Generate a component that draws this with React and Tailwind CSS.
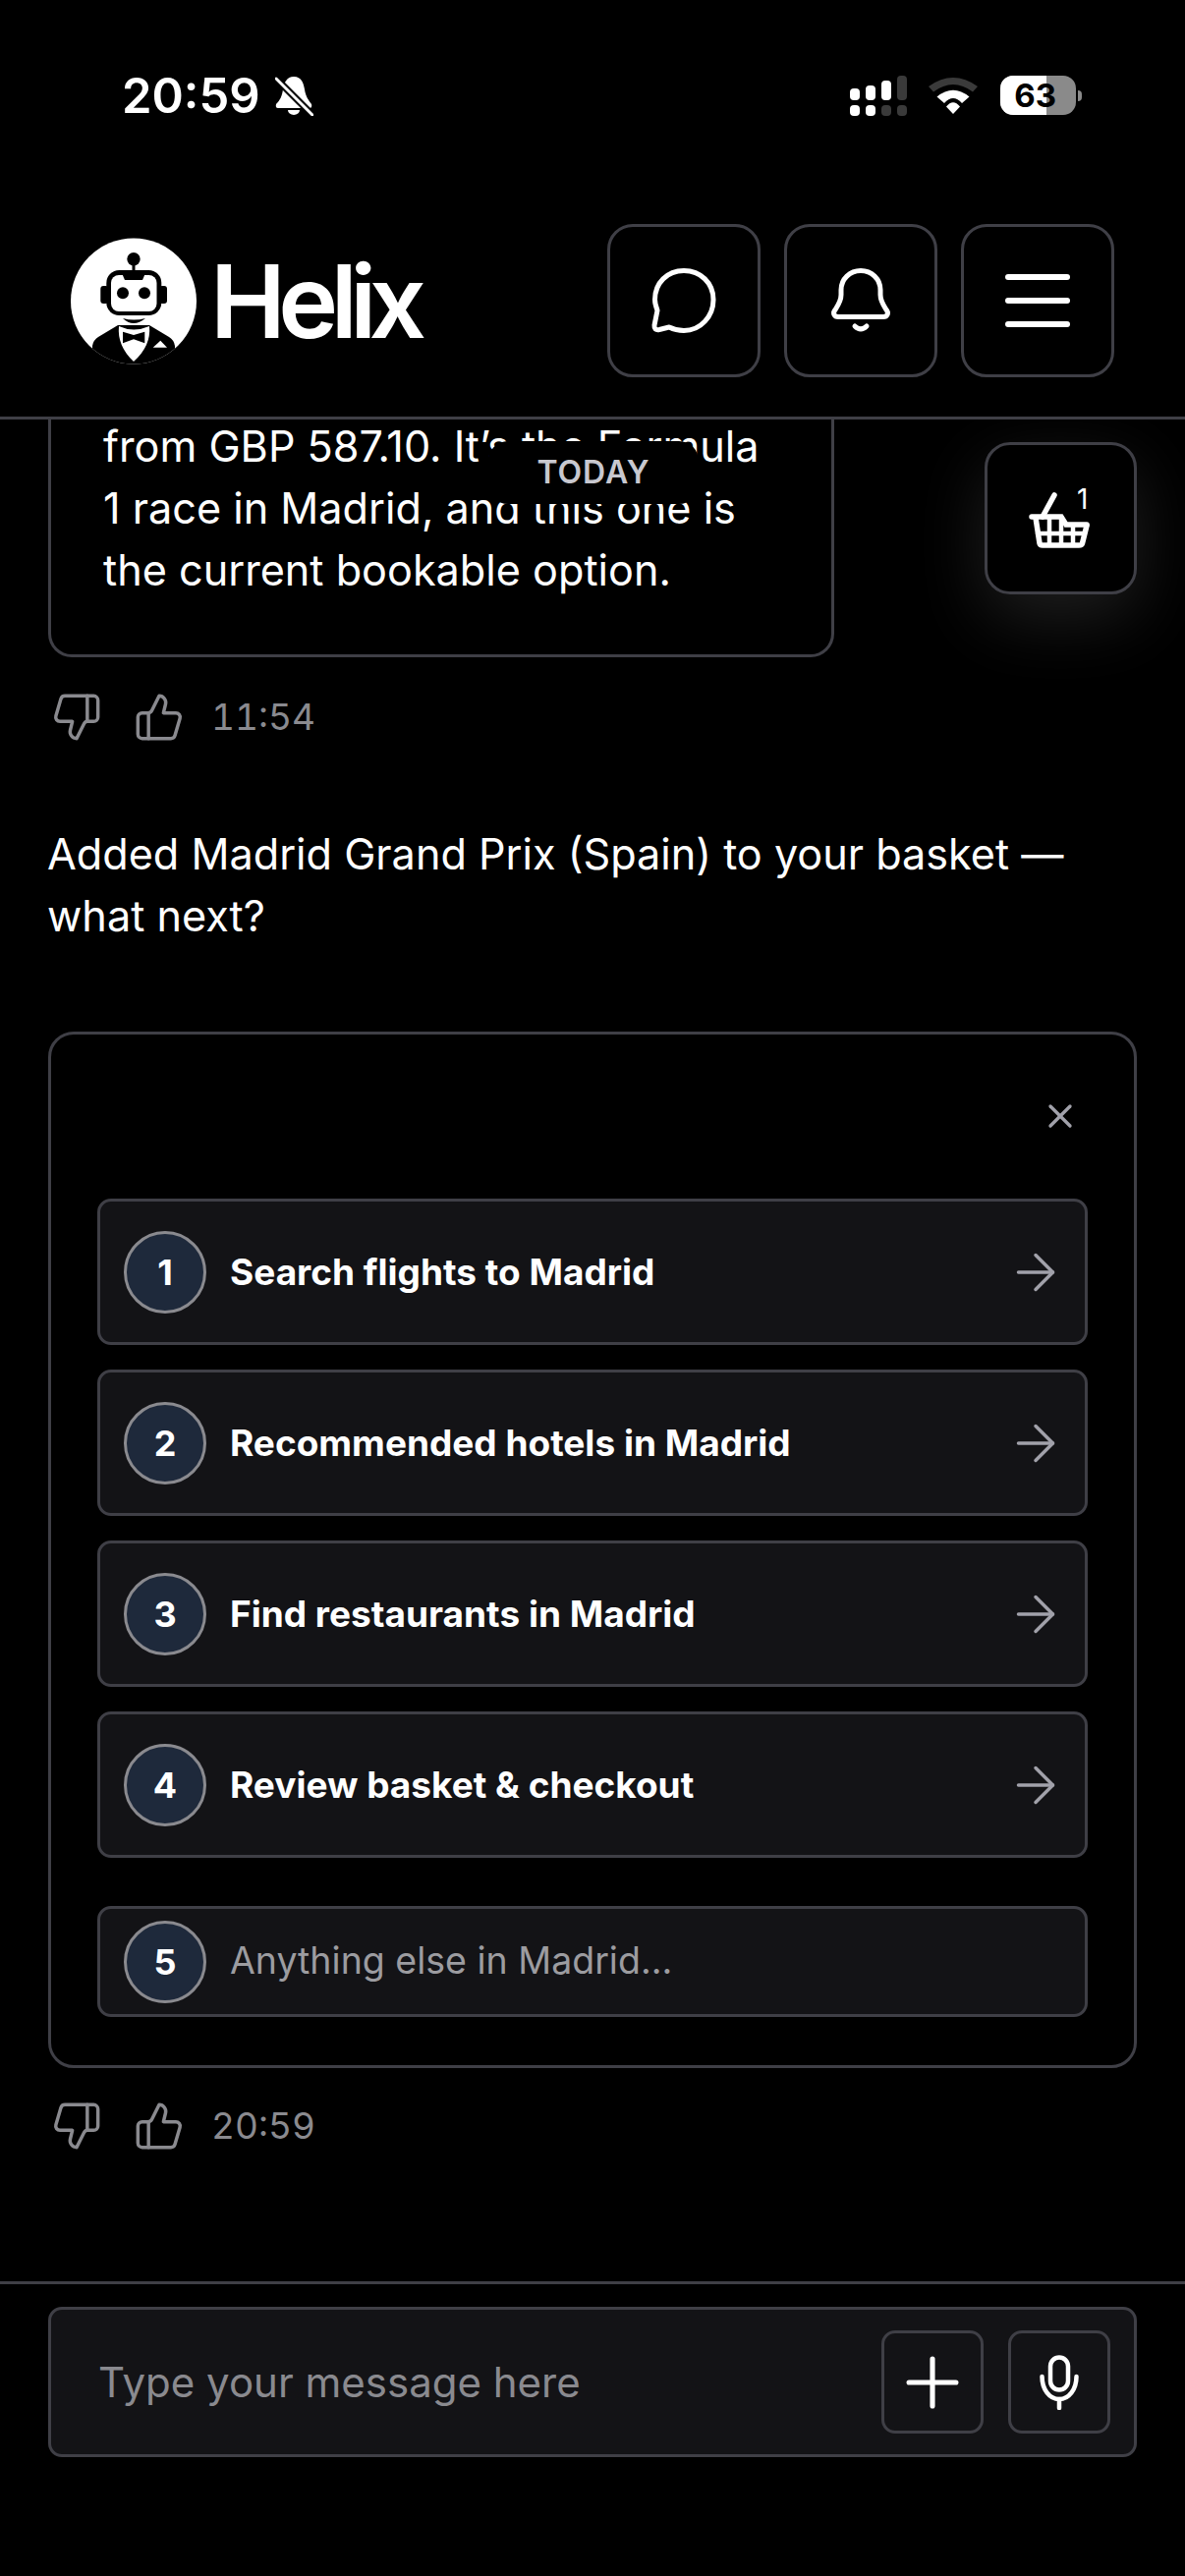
import { ArrowRight, Plus, ThumbsDown, ThumbsUp, X } from "lucide-react";

const options = [
  { number: 1, label: "Search flights to Madrid" },
  { number: 2, label: "Recommended hotels in Madrid" },
  { number: 3, label: "Find restaurants in Madrid" },
  { number: 4, label: "Review basket & checkout" },
];

export default function App() {
  return (
    <div className="flex h-[2622px] w-[1206px] flex-col overflow-hidden bg-black font-['Inter',sans-serif] text-white">
      <StatusBar />
      <Header />

      <main className="relative min-h-0 flex-1 overflow-hidden px-[49px]">
        <div className="-mt-[4px] w-[800px] rounded-b-[24px] border-x-[3px] border-b-[3px] border-[#3f3f46] pb-[54px] pl-[53px] pr-[50px] text-[43.2px] leading-[63px]">
          from GBP 587.10. It’s the Formula 1 race in Madrid, and this one is the current bookable option.
        </div>

        <div className="absolute left-[497px] top-[22px] flex h-[64px] w-[214px] items-center justify-center rounded-[20px] bg-black text-[32px] font-semibold tracking-[1px] text-[#c8c8cf]">
          TODAY
        </div>

        <button className="absolute left-[1002px] top-[23px] flex h-[155px] w-[155px] items-center justify-center rounded-[26px] border-[3px] border-[#3f3f46] bg-black shadow-[0_24px_70px_rgba(255,255,255,0.12)]">
          <span className="-ml-[4px] flex">
            <BasketIcon />
          </span>
          <span className="absolute left-[91px] top-[41px] text-[28px] leading-[28px]">1</span>
        </button>

        <Feedback time="11:54" className="mt-[39px]" />

        <p className="-ml-[1px] mt-[86px] w-[1090px] text-[43.2px] leading-[63px]">
          Added Madrid Grand Prix (Spain) to your basket — what next?
        </p>

        <section className="mt-[86px] rounded-[26px] border-[3px] border-[#3f3f46] px-[47px] pb-[49px] pt-[47px]">
          <div className="flex h-[120px] items-start justify-end">
            <X size={40} strokeWidth={2} className="mr-[8px] mt-[16px] text-[#a1a1aa]" />
          </div>

          <div className="flex flex-col gap-[25px]">
            {options.map((option) => (
              <div
                key={option.number}
                className="flex h-[149px] items-center rounded-[14px] border-[3px] border-[#3f3f46] bg-[#131316] pl-[24px] pr-[20px]"
              >
                <NumberBadge number={option.number} />
                <span className="ml-[24px] flex-1 text-[37px] font-bold">{option.label}</span>
                <ArrowRight size={60} strokeWidth={1.4} className="text-[#a1a1aa]" />
              </div>
            ))}
          </div>

          <div className="mt-[49px] flex h-[113px] items-center rounded-[14px] border-[3px] border-[#3f3f46] bg-[#131316] pl-[24px]">
            <NumberBadge number={5} />
            <span className="ml-[24px] text-[37.5px] text-[#9c9ca0]">Anything else in Madrid...</span>
          </div>
        </section>

        <Feedback time="20:59" className="mt-[37px]" />
      </main>

      <footer className="h-[300px] shrink-0 border-t-[3px] border-[#3f3f46] px-[49px] pt-[23px]">
        <div className="flex h-[153px] items-center rounded-[14px] border-[3px] border-[#3f3f46] bg-[#131316] pl-[48px] pr-[24px]">
          <span className="flex-1 text-[42px] text-[#8a8a8f]">Type your message here</span>
          <button className="flex h-[105px] w-[104px] items-center justify-center rounded-[14px] border-[3px] border-[#3f3f46]">
            <Plus size={82} strokeWidth={1.5} />
          </button>
          <button className="ml-[25px] flex h-[105px] w-[104px] items-center justify-center rounded-[14px] border-[3px] border-[#3f3f46]">
            <MicIcon />
          </button>
        </div>
      </footer>
    </div>
  );
}

function StatusBar() {
  return (
    <div className="flex h-[196px] shrink-0 items-start pl-[124px] pt-[77px]">
      <span className="text-[49px] font-semibold leading-[41px]">20:59</span>
      <MutedBell />
      <SignalIcon />
      <WifiIcon />
      <Battery />
    </div>
  );
}

function SignalIcon() {
  const bars = [
    { height: "h-[12px]", bar: "bg-white", dot: "bg-white" },
    { height: "h-[15px]", bar: "bg-white", dot: "bg-white" },
    { height: "h-[20px]", bar: "bg-white", dot: "bg-[#3a3a3a]" },
    { height: "h-[25px]", bar: "bg-[#3a3a3a]", dot: "bg-[#3a3a3a]" },
  ];

  return (
    <div className="ml-[546px] flex h-[41px] gap-[6px]">
      {bars.map((item, index) => (
        <div key={index} className="flex w-[10px] flex-col items-center justify-end">
          <div className={`w-[10px] rounded-[4px] ${item.height} ${item.bar}`} />
          <div className={`mt-[5px] h-[11px] w-[10px] rounded-[4px] ${item.dot}`} />
        </div>
      ))}
    </div>
  );
}

function WifiIcon() {
  return (
    <svg width="50" height="38" viewBox="0 0 50 38" className="ml-[22px] mt-[1px]">
      <path d="M0 10 Q25 -8 50 10 L45 15.5 Q25 0.5 5 15.5 Z" fill="#3a3a3a" />
      <path d="M8.5 20.5 Q25 7 41.5 20.5 L34 27 Q25 17 16 27 Z" fill="white" />
      <path d="M18 30.5 Q25 22 32 30.5 L25 38 Z" fill="white" />
    </svg>
  );
}

function Battery() {
  return (
    <div className="ml-[23px] flex items-center">
      <div className="relative flex h-[40px] w-[77px] items-center justify-center rounded-[13px] bg-[#8a8a8a]">
        <div className="absolute inset-y-0 left-0 w-[47px] rounded-l-[13px] bg-white" />
        <span className="relative mr-[5px] text-[33px] font-bold leading-[40px] text-black">63</span>
      </div>
      <div className="ml-[2px] h-[11px] w-[4px] rounded-r-full bg-[#8a8a8a]" />
    </div>
  );
}

function MutedBell() {
  return (
    <svg width="39" height="41" viewBox="0 0 39 41" className="ml-[15px]">
      <path
        d="M19 1 C27 1 29 8 30 14 C31 21 34 25 37 29 Q38 33 35 33 H3 Q0 33 1 29 C5 25 7 21 8 14 C9 7 12 1 19 1 Z"
        fill="white"
      />
      <path d="M13 35 H25 A6 5 0 0 1 13 35 Z" fill="white" />
      <path d="M1 3 L38 40" stroke="black" strokeWidth="7" />
      <path d="M1 3 L38 40" stroke="white" strokeWidth="3" strokeLinecap="round" />
    </svg>
  );
}

function Header() {
  return (
    <header className="flex h-[231px] shrink-0 items-start border-b-[3px] border-[#3f3f46] pl-[72px] pr-[72px] pt-[32px]">
      <div className="flex h-[156px] flex-1 items-center">
        <HelixLogo />
        <span className="ml-[14px] text-[103px] font-semibold leading-none tracking-[-7.5px]">Helix</span>
      </div>
      <div className="flex gap-[24px]">
        <HeaderButton>
          <svg width="66" height="66" viewBox="0 0 66 66" fill="none" stroke="white" strokeWidth="5" strokeLinejoin="round">
            <path d="M33 2.5 C16 2.5 3.5 15 3.5 32 C3.5 36 4.5 39 6 43 L3 58 Q2.5 63.5 8 62.5 L18 60 Q25 63.5 33 63.5 C50 63.5 63 49 63 32 C63 15 50 2.5 33 2.5 Z" />
          </svg>
        </HeaderButton>
        <HeaderButton>
          <svg width="60" height="66" viewBox="0 0 60 66" fill="none" stroke="white" strokeWidth="5" strokeLinecap="round">
            <path d="M30 2.5 C19 2.5 10 11 10 22 V27 C10 34 6 39 3.5 43 C1.5 46 3 49.5 7 49.5 H53 C57 49.5 58.5 46 56.5 43 C54 39 50 34 50 27 V22 C50 11 41 2.5 30 2.5 Z" />
            <path d="M24 59 Q30 65 36 59" />
          </svg>
        </HeaderButton>
        <HeaderButton>
          <div className="flex w-[66px] flex-col gap-[18px]">
            <div className="h-[6px] rounded-full bg-white" />
            <div className="h-[6px] rounded-full bg-white" />
            <div className="h-[6px] rounded-full bg-white" />
          </div>
        </HeaderButton>
      </div>
    </header>
  );
}

function HeaderButton({ children }) {
  return (
    <button className="flex h-[156px] w-[156px] items-center justify-center rounded-[26px] border-[3px] border-[#3f3f46]">
      {children}
    </button>
  );
}

function HelixLogo() {
  return (
    <svg width="128" height="129" viewBox="0 0 128 129">
      <defs>
        <clipPath id="logo-circle">
          <circle cx="64" cy="64.5" r="64" />
        </clipPath>
      </defs>
      <circle cx="64" cy="64.5" r="64" fill="white" />
      <g clipPath="url(#logo-circle)">
        <circle cx="64" cy="21.7" r="6.7" fill="black" />
        <rect x="62.5" y="26" width="3" height="9" fill="black" />
        <rect x="30.3" y="49" width="8" height="18" rx="3" fill="black" />
        <rect x="90" y="49" width="8" height="18" rx="3" fill="black" />
        <rect x="36.3" y="33" width="56" height="46" rx="13" fill="black" />
        <rect x="41" y="38" width="46.5" height="37" rx="8" fill="white" />
        <path d="M52 36 H76 L73 43 H55 Z" fill="black" />
        <circle cx="53" cy="56.3" r="6" fill="black" />
        <circle cx="75" cy="56.3" r="6" fill="black" />
        <path d="M53 82 Q64 85 76 82 Q70 87 64 87 Q58 87 53 82 Z" fill="black" />
        <path d="M22 129 V110 Q23 104 28 101 L48 89 H80 L100 101 Q105 104 106 110 V129 Z" fill="black" />
        <path d="M49 90 Q64 97 80 90 Q82 110 64 126 Q47 110 49 90 Z" fill="white" />
        <path d="M53 95.7 L64 99 L75.3 95.7 V107.3 L64 103.3 L53 107.3 Z" fill="black" />
        <path d="M83.7 111.7 L91.3 104.7 L98 111.7 Z" fill="white" />
      </g>
    </svg>
  );
}

function BasketIcon() {
  return (
    <svg width="62" height="60" viewBox="0 0 62 60" fill="none" stroke="white" strokeWidth="5.5" strokeLinecap="round">
      <path d="M26 6 L14 28" />
      <path d="M3 28 H33 L38 36 H59" />
      <path d="M7 29 L11 55 Q11.5 57 14 57 H51 Q54 57 54.5 55 L59 37" />
      <path d="M9 45 H56" strokeWidth="4.5" />
      <path d="M21 30 V56 M33 30 V56 M45 37 V56" strokeWidth="4.5" />
    </svg>
  );
}

function MicIcon() {
  return (
    <svg width="40" height="56" viewBox="0 0 40 56" fill="none" stroke="white" strokeWidth="4.5" strokeLinecap="round">
      <rect x="11" y="2.5" width="18" height="33" rx="9" />
      <path d="M2.5 22 C2.5 35 10 45 20 45 C30 45 37.5 35 37.5 22" />
      <path d="M20 45 V54" />
    </svg>
  );
}

function NumberBadge({ number }) {
  return (
    <div className="flex h-[84px] w-[84px] shrink-0 items-center justify-center rounded-full border-[3px] border-[#8a8a8f] bg-[#1e293b] text-[36px] font-bold">
      {number}
    </div>
  );
}

function Feedback({ time, className }) {
  return (
    <div className={`flex h-[44px] items-center pl-[3px] text-[#8a8a8f] ${className}`}>
      <ThumbsDown size={52} strokeWidth={1.6} />
      <ThumbsUp size={52} strokeWidth={1.6} className="ml-[32px]" />
      <span className="ml-[27px] text-[37px] tabular-nums">{time}</span>
    </div>
  );
}
